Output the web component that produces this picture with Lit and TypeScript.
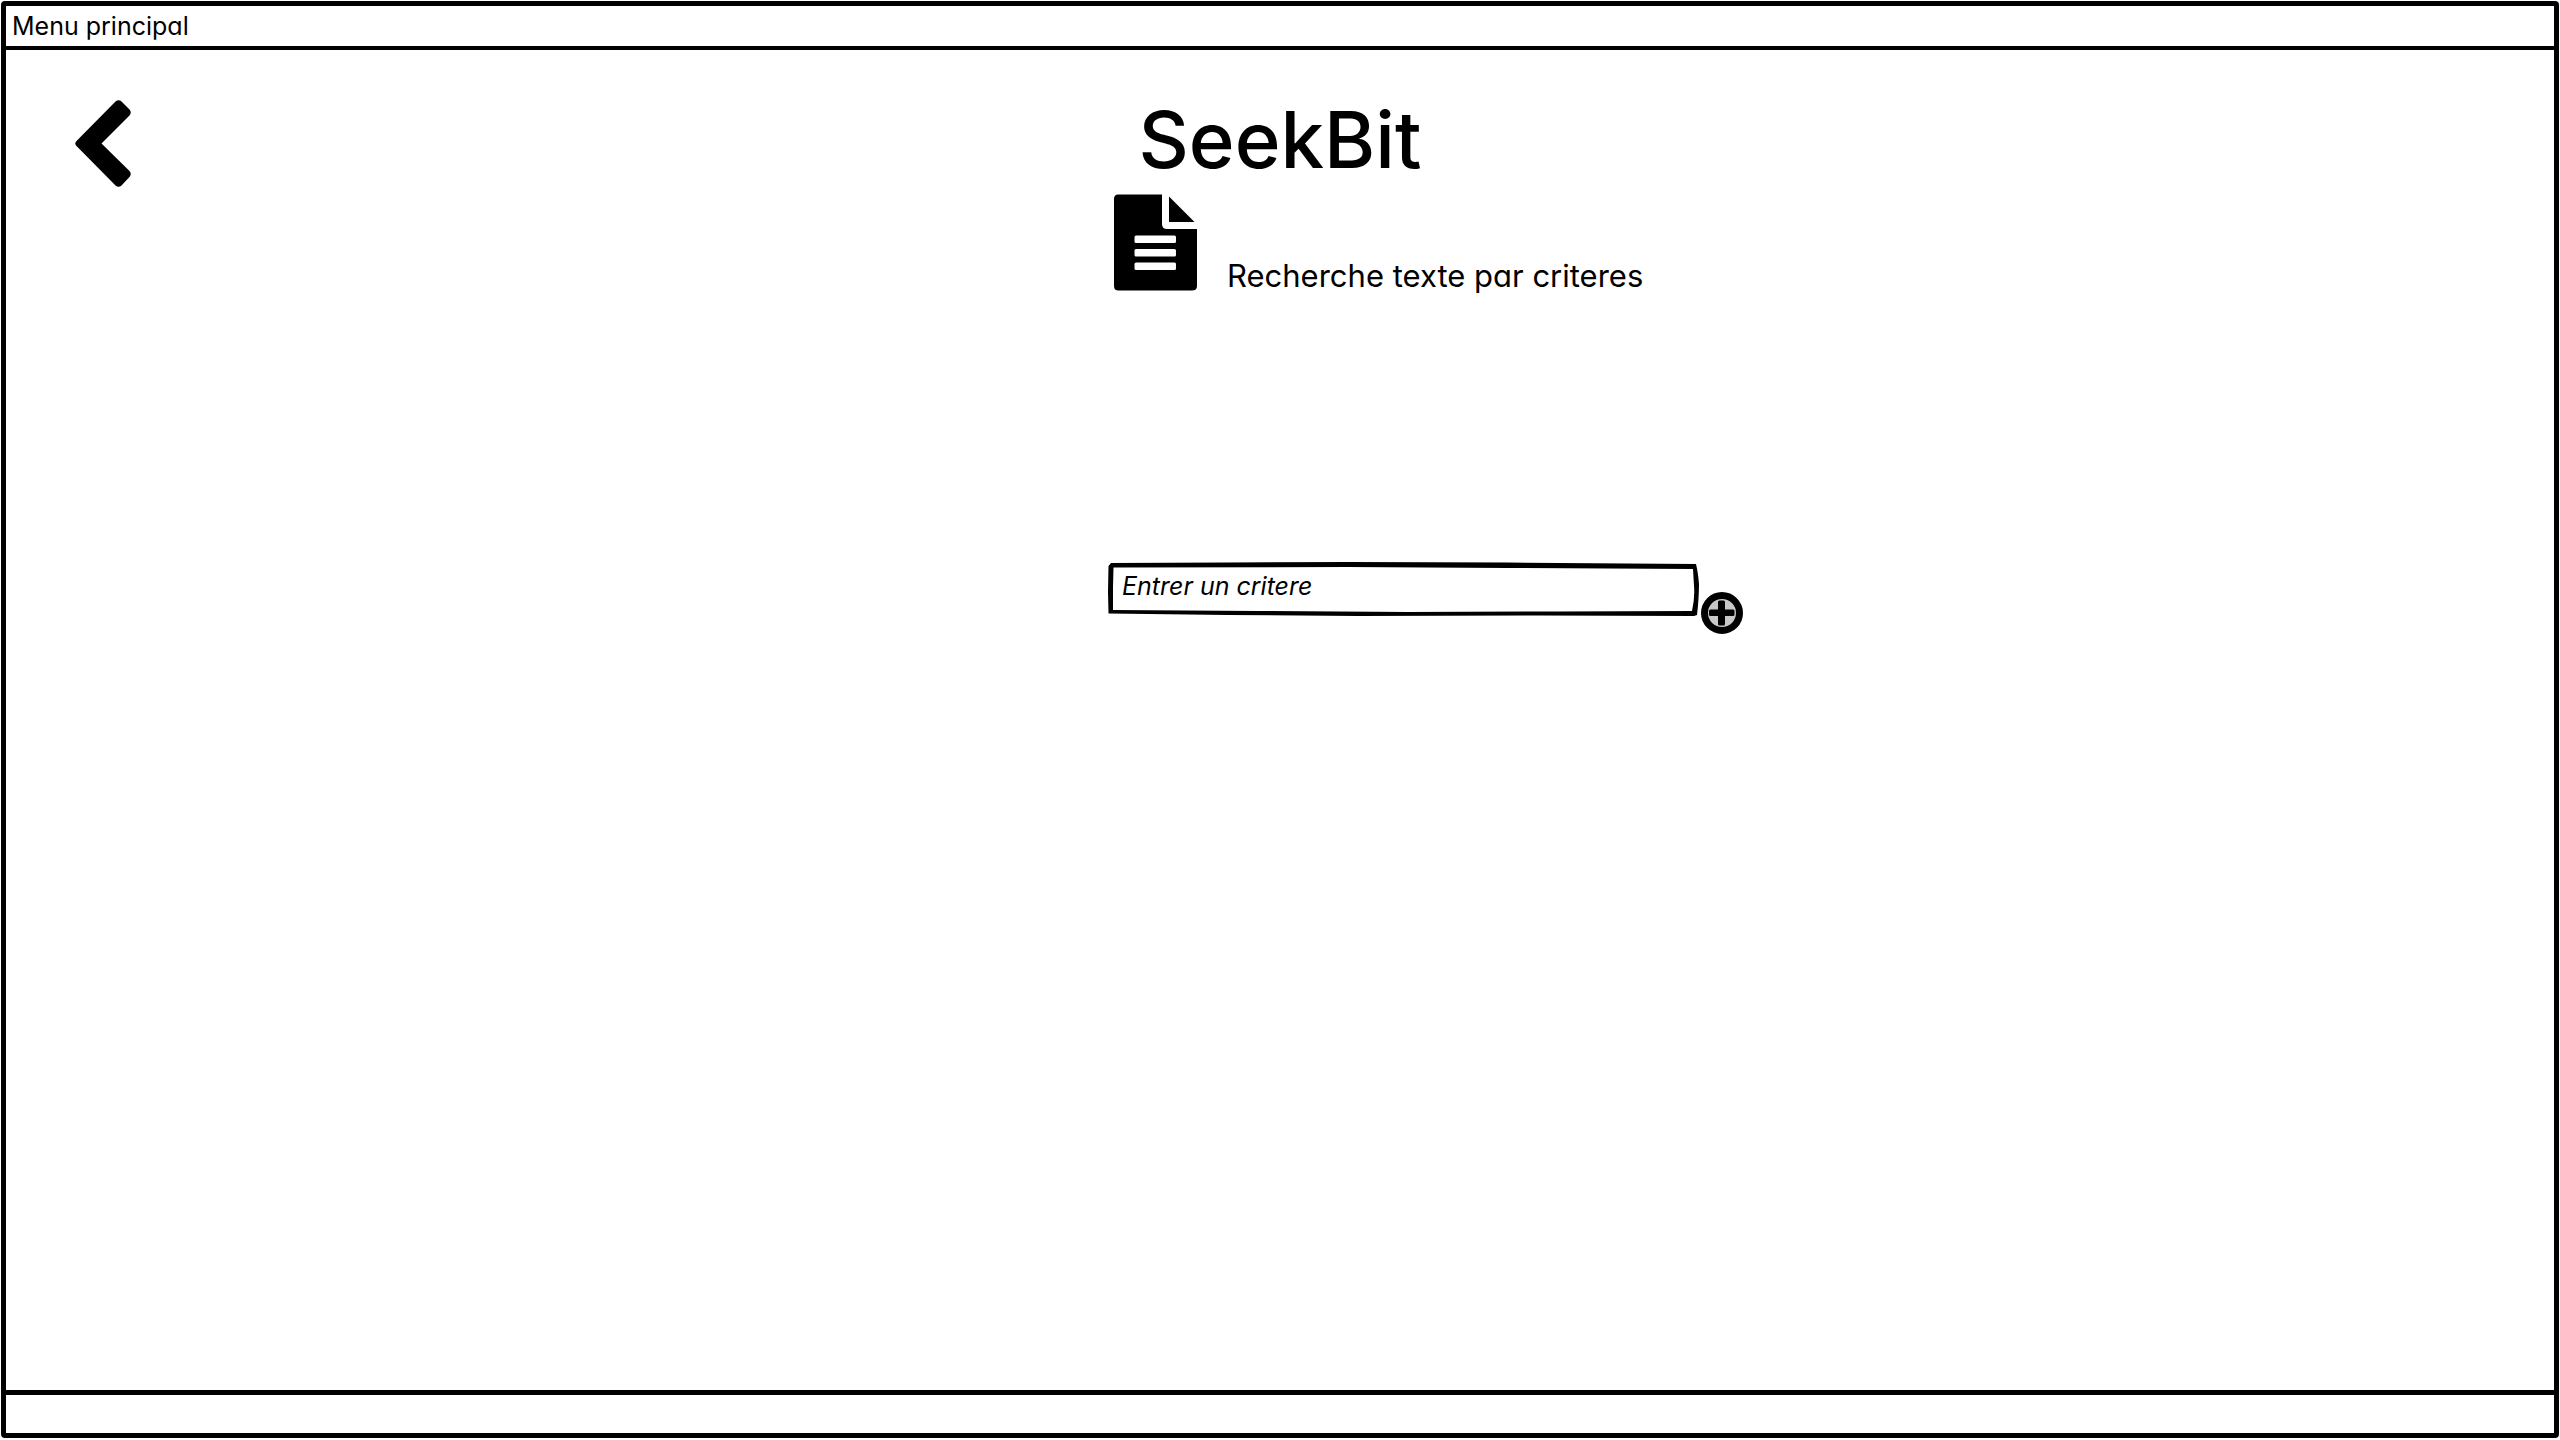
import { LitElement, html, css } from "lit";
import { customElement, state } from "lit/decorators.js";

@customElement("app-root")
export class AppRoot extends LitElement {
  @state() private criterion = "";

  static styles = css`
    :host {
      display: block;
      background: #fff;
      color: #000;
      font-family: Inter, "Open Sans", sans-serif;
      font-feature-settings: "cv11", "ss03";
      font-size: 25px;
      line-height: 32px;
    }
    * {
      box-sizing: border-box;
    }
    .page {
      min-height: 100vh;
      padding: 1px 1px 2px;
      display: flex;
    }
    .frame {
      flex: 1;
      display: flex;
      flex-direction: column;
      border: 5px solid #000;
      border-radius: 4px;
    }
    .menu {
      padding: 4px 6px;
      border-bottom: 4px solid #000;
    }
    .menu a {
      color: inherit;
      text-decoration: none;
    }
    .main {
      flex: 1;
      display: grid;
      grid-template-columns: calc(50% - 172px) 1fr;
      align-items: start;
      padding-top: 50px;
    }
    button {
      display: block;
      padding: 0;
      border: 0;
      background: none;
      color: inherit;
      cursor: pointer;
    }
    svg {
      display: block;
    }
    .back {
      margin-left: 69px;
    }
    .title {
      width: 344px;
      margin: 0;
      text-align: center;
      font-size: 78px;
      font-weight: 500;
      line-height: 80px;
    }
    .topic {
      display: flex;
      align-items: flex-end;
      gap: 30px;
      padding: 14px 0 0 6px;
    }
    .subtitle {
      margin: 0;
      font-size: 31px;
      font-weight: 400;
      line-height: 30px;
    }
    .search {
      display: flex;
      align-items: flex-end;
      gap: 2px;
      padding-top: 271px;
    }
    .field {
      position: relative;
      width: 591px;
      margin-bottom: 18px;
    }
    .outline {
      position: absolute;
      inset: 0;
      width: 100%;
      height: 100%;
      pointer-events: none;
    }
    .input {
      display: block;
      width: 100%;
      height: 54px;
      padding: 0 14px 6px;
      border: 0;
      background: none;
      color: inherit;
      font: inherit;
      font-feature-settings: inherit;
      font-style: italic;
      outline: none;
    }
    .input::placeholder {
      color: #000;
      opacity: 1;
    }
    .footer {
      height: 43px;
      border-top: 5px solid #000;
    }
  `;

  private onInput(e: Event) {
    this.criterion = (e.target as HTMLInputElement).value;
  }

  render() {
    return html`
      <div class="page">
        <div class="frame">
          <nav class="menu"><a href="#menu">Menu principal</a></nav>
          <main class="main">
            <button class="back" type="button" aria-label="Retour">
              <svg width="56" height="88" viewBox="0 0 56 88" aria-hidden="true">
                <path d="M40.500 1.500Q43.500 -1 46.500 1.500L54.500 9.500Q57 12.500 54.500 15.500L26.500 43.500L54.500 71Q57 74 54.500 77L46.500 85.500Q43.500 88 40.500 85.500L1.500 46Q-1 43.500 1.500 41Z" />
              </svg>
            </button>
            <div>
              <h1 class="title">SeekBit</h1>
              <div class="topic">
                <svg width="83" height="97" viewBox="0 0 83 97" aria-hidden="true">
                  <path fill-rule="evenodd" d="M4 0.500H48V30Q48 35 53 35H83V92Q83 96.500 78 96.500H4.500Q0 96.500 0 92V5Q0 0.500 4 0.500ZM22 41.500Q20.500 41.500 20.500 43V47.500Q20.500 49 22 49H60.500Q62 49 62 47.500V43Q62 41.500 60.500 41.500ZM22 55Q20.500 55 20.500 56.500V61Q20.500 62.500 22 62.500H60.500Q62 62.500 62 61V56.500Q62 55 60.500 55ZM22 68.500Q20.500 68.500 20.500 70V74.500Q20.500 76 22 76H60.500Q62 76 62 74.500V70Q62 68.500 60.500 68.500Z" />
                  <path d="M55 2.500L80.500 28H55Z" />
                </svg>
                <h2 class="subtitle">Recherche texte par criteres</h2>
              </div>
              <form class="search" @submit=${(e: Event) => e.preventDefault()}>
                <div class="field">
                  <input
                    class="input"
                    type="text"
                    aria-label="Entrer un critere"
                    placeholder="Entrer un critere"
                    .value=${this.criterion}
                    @input=${this.onInput}
                  />
                  <svg class="outline" viewBox="0 0 591 54" preserveAspectRatio="none" aria-hidden="true">
                    <path fill-rule="evenodd" d="M3 1L120 0.500L240 0L400 0.500L588 2Q590 10 591 22Q591 36 589 53L586 54L430 53.500L250 54L120 53L0.500 51.500L0 30L0.500 4ZM5.500 5.500L5 25L5 48L150 49L300 50L450 49.500L584 49Q587 36 586 24L585 7L400 6L240 5Z" />
                  </svg>
                </div>
                <button type="submit" aria-label="Ajouter le critere">
                  <svg width="42" height="42" viewBox="0 0 42 42" aria-hidden="true">
                    <circle cx="21" cy="21" r="17.500" fill="#c8c8c8" stroke="#000" stroke-width="7" />
                    <path d="M18.500 8.500H22.500Q24 8.500 24 10V17.500H32Q33.500 17.500 33.500 19V22.500Q33.500 24 32 24H24V32Q24 33.500 22.500 33.500H18.500Q17 33.500 17 32V24H9.500Q8 24 8 22.500V19Q8 17.500 9.500 17.500H17V10Q17 8.500 18.500 8.500Z" />
                  </svg>
                </button>
              </form>
            </div>
          </main>
          <footer class="footer"></footer>
        </div>
      </div>
    `;
  }
}
